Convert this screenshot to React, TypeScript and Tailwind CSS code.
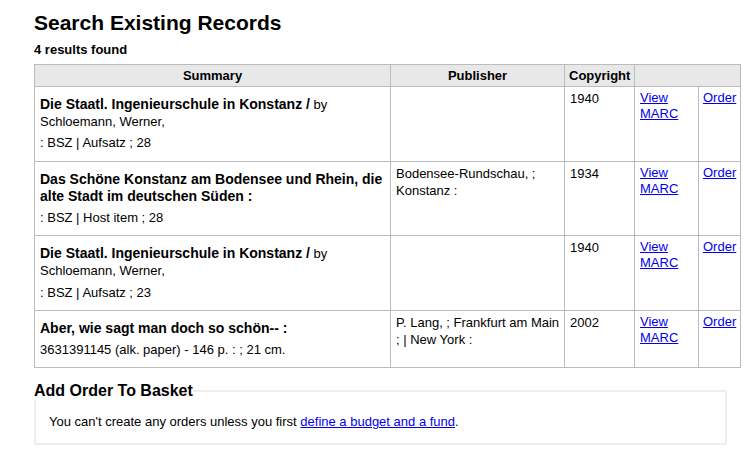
import React from "react";

type Row = {
  title: string;
  by?: string;
  extra: string;
  publisher: string[];
  year: string;
};

const rows: Row[] = [
  {
    title: "Die Staatl. Ingenieurschule in Konstanz /",
    by: " by Schloemann, Werner,",
    extra: ": BSZ | Aufsatz ; 28",
    publisher: [],
    year: "1940",
  },
  {
    title: "Das Schöne Konstanz am Bodensee und Rhein, die alte Stadt im deutschen Süden :",
    extra: ": BSZ | Host item ; 28",
    publisher: ["Bodensee-Rundschau, ;", "Konstanz :"],
    year: "1934",
  },
  {
    title: "Die Staatl. Ingenieurschule in Konstanz /",
    by: " by Schloemann, Werner,",
    extra: ": BSZ | Aufsatz ; 23",
    publisher: [],
    year: "1940",
  },
  {
    title: "Aber, wie sagt man doch so schön-- :",
    extra: "3631391145 (alk. paper) - 146 p. : ; 21 cm.",
    publisher: ["P. Lang, ; Frankfurt am Main", "; | New York :"],
    year: "2002",
  },
];

export default function App() {
  return (
    <div className="min-h-[462px] w-[750px] bg-white pl-[34px] font-['Liberation_Sans',Arial,sans-serif] text-[13px] text-black">
      <h1 className="pt-[11px] text-[21px] font-bold leading-[24px]">Search Existing Records</h1>
      <div className="mt-[6px] font-bold leading-[17px]">4 results found</div>
      <table className="mt-[6px] w-[706px] table-fixed border-collapse">
        <colgroup>
          <col className="w-[356px]" />
          <col className="w-[174px]" />
          <col className="w-[70px]" />
          <col className="w-[64px]" />
          <col className="w-[42px]" />
        </colgroup>
        <thead>
          <tr className="bg-[#e8e8e8]">
            <th className="border border-[#bcbcbc] px-[5px] py-[2px] text-center font-bold leading-[17px]">Summary</th>
            <th className="border border-[#bcbcbc] px-[5px] py-[2px] text-center font-bold leading-[17px]">Publisher</th>
            <th className="whitespace-nowrap border border-[#bcbcbc] px-[4px] py-[2px] text-center font-bold leading-[17px]">Copyright</th>
            <th colSpan={2} className="border border-[#bcbcbc] px-[5px] py-[2px]"></th>
          </tr>
        </thead>
        <tbody>
          {rows.map((r, i) => (
            <tr key={i}>
              <td className="border border-[#bcbcbc] px-[5px] py-[3px] align-top leading-[17.2px]">
                <div className="my-[6px]">
                  <div>
                    <span className="text-[14px] font-bold">{r.title}</span>
                    {r.by}
                  </div>
                  <div className="mt-[4px]">{r.extra}</div>
                </div>
              </td>
              <td className="border border-[#bcbcbc] px-[5px] py-[3px] align-top leading-[17.2px]">
                {r.publisher.map((p, j) => (
                  <div key={j} className="whitespace-nowrap">
                    {p}
                  </div>
                ))}
              </td>
              <td className="border border-[#bcbcbc] px-[5px] py-[3px] align-top leading-[17.2px]">{r.year}</td>
              <td className="border border-[#bcbcbc] px-[5px] py-[3px] align-top leading-[16px]">
                <a href="#" className="text-[#0000ee] underline">
                  View MARC
                </a>
              </td>
              <td className="whitespace-nowrap border border-[#bcbcbc] px-[4px] py-[3px] align-top leading-[16px]">
                <a href="#" className="text-[#0000ee] underline">
                  Order
                </a>
              </td>
            </tr>
          ))}
        </tbody>
      </table>
      <fieldset className="mt-[14px] w-[693px] border-2 border-[#eeeeee] px-[13px] pb-[13px] pt-[13px]">
        <legend className="-ml-[15px] p-0 text-[16px] font-bold leading-[18px]">Add Order To Basket</legend>
        <div className="leading-[17px]">
          You can't create any orders unless you first{" "}
          <a href="#" className="text-[#0000ee] underline">
            define a budget and a fund
          </a>
          .
        </div>
      </fieldset>
    </div>
  );
}
